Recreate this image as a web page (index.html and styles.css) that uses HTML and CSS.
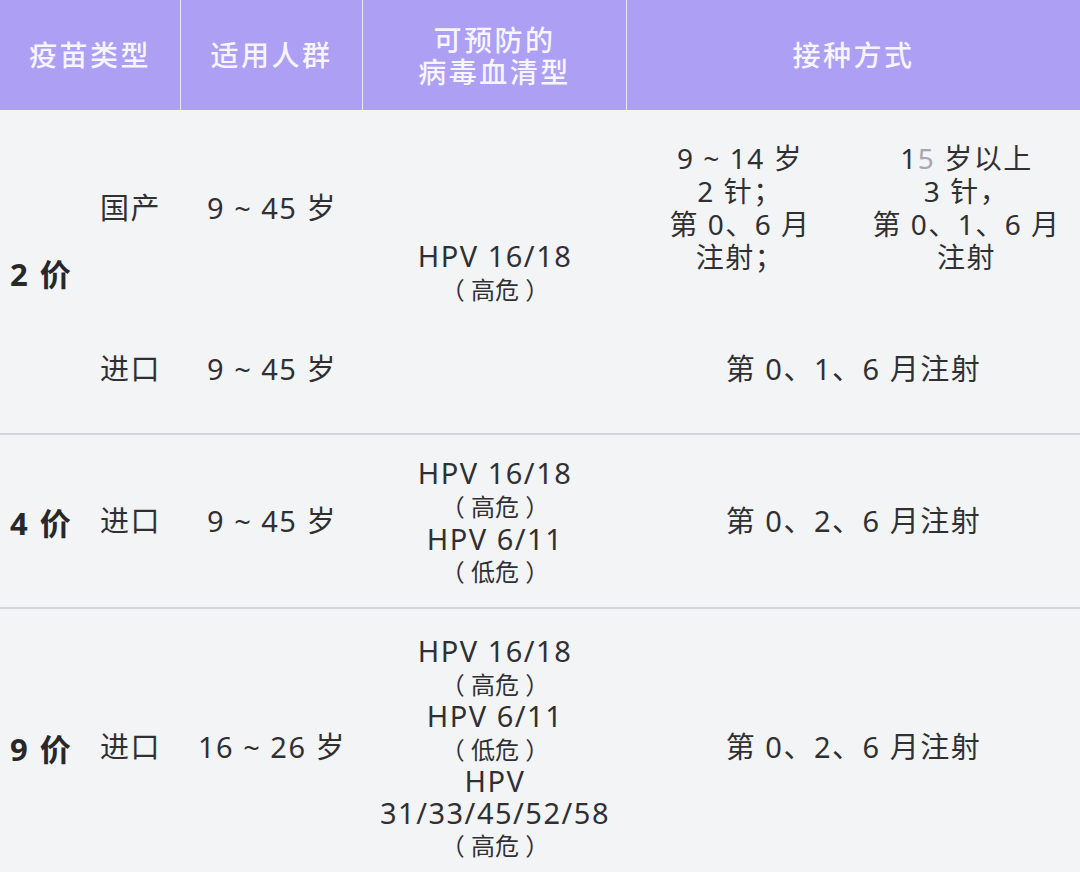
FILE: index.html
```html
<!DOCTYPE html>
<html lang="zh">
<head>
<meta charset="utf-8">
<title>HPV 疫苗</title>
<link rel="stylesheet" href="styles.css">
</head>
<body>
<div class="page">
  <div class="head">
    <div class="hcell"><span>疫苗类型</span></div>
    <div class="hcell"><span>适用人群</span></div>
    <div class="hcell two"><span>可预防的<br>病毒血清型</span></div>
    <div class="hcell last"><span>接种方式</span></div>
  </div>

  <div class="sec sec1">
    <div class="cell type c1 r-all"><span>2 价</span></div>
    <div class="cell origin c2 ra"><span>国产</span></div>
    <div class="cell age c3 ra"><span>9 ~ 45 岁</span></div>
    <div class="cell hpv c4 r-all"><span>HPV 16/18<br><span class="risk">（ 高危 ）</span></span></div>
    <div class="cell sched c5 ra"><span>9 ~ 14 岁<br>2 针；<br>第 0、6 月<br>注射；</span></div>
    <div class="cell sched c6 ra"><span>1<span class="dim">5</span> 岁以上<br>3 针，<br>第 0、1、6 月<br>注射</span></div>
    <div class="cell origin c2 rb"><span>进口</span></div>
    <div class="cell age c3 rb"><span>9 ~ 45 岁</span></div>
    <div class="cell c56 rb"><span>第 0、1、6 月注射</span></div>
  </div>

  <div class="sec sec2">
    <div class="cell type"><span>4 价</span></div>
    <div class="cell origin"><span>进口</span></div>
    <div class="cell age"><span>9 ~ 45 岁</span></div>
    <div class="cell hpv"><span>HPV 16/18<br><span class="risk">（ 高危 ）</span><br>HPV 6/11<br><span class="risk">（ 低危 ）</span></span></div>
    <div class="cell c56"><span>第 0、2、6 月注射</span></div>
  </div>

  <div class="sec sec3">
    <div class="cell type"><span>9 价</span></div>
    <div class="cell origin"><span>进口</span></div>
    <div class="cell age"><span>16 ~ 26 岁</span></div>
    <div class="cell hpv"><span>HPV 16/18<br><span class="risk">（ 高危 ）</span><br>HPV 6/11<br><span class="risk">（ 低危 ）</span><br>HPV<br>31/33/45/52/58<br><span class="risk">（ 高危 ）</span></span></div>
    <div class="cell c56"><span>第 0、2、6 月注射</span></div>
  </div>
</div>
</body>
</html>
```

FILE: styles.css
```css
html, body {
  margin: 0;
  padding: 0;
  background: #f3f4f6;
}
body {
  font-family: "Noto Sans", "Noto Sans CJK SC", sans-serif;
  color: #303033;
  overflow: hidden;
}
.page {
  width: 1080px;
  height: 872px;
  overflow: hidden;
}
.head {
  display: grid;
  grid-template-columns: 181px 182px 264px 1fr;
  height: 110px;
  background: #ac9ff4;
}
.hcell {
  display: flex;
  align-items: center;
  justify-content: center;
  text-align: center;
  color: #f6f4ff;
  font-size: 28px;
  font-weight: 500;
  line-height: 32px;
  letter-spacing: 2.5px;
  border-right: 1.5px solid rgba(255, 255, 255, 0.75);
}
.hcell.last {
  border-right: none;
}
.hcell.two {
  padding-top: 2px;
}
.sec {
  display: grid;
  grid-template-columns: 88px 93px 182px 264px 226px 1fr;
  box-sizing: border-box;
}
.sec1 {
  height: 323px;
  grid-template-rows: 195px 128px;
}
.sec2 {
  height: 174px;
  border-top: 2px solid #d4d4da;
}
.sec3 {
  height: 290px;
  border-top: 2px solid #d4d4da;
  padding-bottom: 12px;
}
.cell {
  display: flex;
  align-items: center;
  justify-content: center;
  text-align: center;
  font-size: 29px;
  line-height: 32px;
  letter-spacing: 1.5px;
}
.c1 { grid-column: 1; }
.c2 { grid-column: 2; }
.c3 { grid-column: 3; }
.c4 { grid-column: 4; }
.c5 { grid-column: 5; }
.c6 { grid-column: 6; }
.c56 { grid-column: 5 / 7; }
.ra { grid-row: 1; }
.rb { grid-row: 2; }
.r-all { grid-row: 1 / 3; }
.type {
  justify-content: flex-start;
  font-size: 31px;
  font-weight: 700;
  color: #26282a;
  padding-top: 4px;
  padding-left: 10px;
  letter-spacing: 2px;
}
.origin {
  padding-right: 8px;
}
.hpv {
  line-height: 31.6px;
  padding-top: 3px;
}
.risk {
  font-size: 24px;
  letter-spacing: 0;
}
.sched {
  line-height: 33px;
  font-size: 28px;
}
.dim {
  color: #a6a6b8;
}
```
